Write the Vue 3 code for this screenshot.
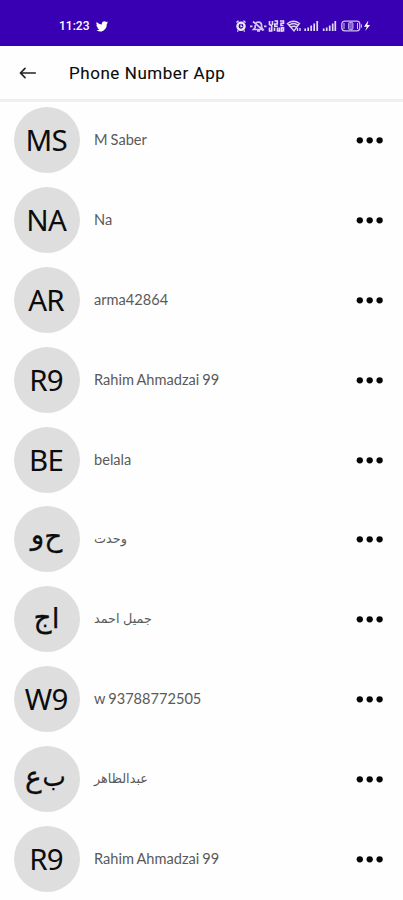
<script setup>
const contacts = [
  { initials: ['M', 'S'], name: 'M Saber' },
  { initials: ['N', 'A'], name: 'Na' },
  { initials: ['A', 'R'], name: 'arma42864' },
  { initials: ['R', '9'], name: 'Rahim Ahmadzai 99' },
  { initials: ['B', 'E'], name: 'belala' },
  { initials: ['ح', 'و'], name: 'وحدت', rtl: true },
  { initials: ['ا', 'ج'], name: 'جمیل احمد', rtl: true },
  { initials: ['W', '9'], name: 'w 93788772505' },
  { initials: ['ب', 'ع'], name: 'عبدالظاهر', rtl: true },
  { initials: ['R', '9'], name: 'Rahim Ahmadzai 99' },
]
const shapes = { 'ح': 'hah', 'و': 'waw', 'ا': 'alef', 'ج': 'jeem', 'ب': 'beh', 'ع': 'ain' }
</script>

<template>
  <div class="screen">
    <div class="status">
      <span class="clock">11:23</span>
      <svg class="bird" width="12" height="11" viewBox="0 0 24 22" fill="#fff">
        <path d="M24 3.2a9 9 0 0 1-2.5 2.6C22 14 16 21 8 21c-3 0-5.600-.8-8-2.300 2.700.3 5-.4 7-2-2.200-.2-3.800-1.500-4.500-3.500h2C2 12.500.7 10.500.8 8.200l2 .6C.6 7.200.2 4.400 1.500 2c2.600 3 6 4.800 10.200 5C10.800 3 13.500.5 16.800.5c1.400 0 2.600.6 3.500 1.500l3-1.100c-.3 1-1 1.900-2 2.600z" />
      </svg>
      <svg class="indicators" width="138" height="14" viewBox="0 0 138 14" fill="none" stroke="#fff">
        <g opacity=".92">
          <circle cx="6" cy="7.300" r="3.600" stroke-width="2.300" />
          <path d="M1.500 3.500l2-1.800M10.500 3.500l-2-1.800M3.300 11.500l-1 1M8.700 11.500l1 1M6 5.500v2.200h1.500" stroke-width="1.200" />
        </g>
        <g opacity=".78" stroke-width="1.700">
          <path d="M18.500 10.500h9.500l-1.400-2V6q-.4-2.700-3.200-3-2.800.3-3.200 3v2.500zM22 12h3M18 2.500l10.500 9M15 7.300h2.500M29 7.300h2.500" />
        </g>
        <g opacity=".85" stroke-width="1.600">
          <path d="M34.500 2v3.500l2.200 1.200V12M37.500 2v4M34.500 8.500V12h3M39.500 2h2.800v3h-2.500v2.200h3M45 2h3.500v2.300H46v2.200h2.500M39.500 8.500V12M42.500 8.500V12h2V8.500M46.500 12V8.700h2v3.100z" />
        </g>
        <g opacity=".82" stroke-width="1.400">
          <path d="M52.500 4.500q6-4.600 12 0L59 12zM54 6.200q4.600-3.400 9 0M55.800 8.300q3-2 5.800 0" />
          <path d="M62.500 9v3M65 9v3" />
        </g>
        <g opacity=".85" stroke-width="1.700">
          <path d="M70.200 9.500V12M73.200 8.500V12M76.200 6.500V12M79.200 4.500V12M82.200 2V12" />
          <path d="M88.700 9.500V12M91.700 8.500V12M94.700 6.500V12M97.700 4.500V12M100.300 2V12" />
        </g>
        <g opacity=".75">
          <rect x="106.800" y="2.200" width="18" height="9.600" rx="3" stroke-width="1.300" />
          <path d="M109 4v6M122.500 4v6" stroke-width="1" />
          <rect x="113.500" y="3.500" width="4.500" height="7" rx="1" fill="#fff" fill-opacity=".5" stroke-width=".8" />
          <path d="M126.500 5.500v3" />
        </g>
        <path d="M133 2l-4 5.700h2.800l-1.600 4.300 4.900-6h-2.800l1-4z" fill="#fff" stroke="none" />
      </svg>
    </div>

    <header class="bar">
      <svg width="18" height="14" viewBox="0 0 18 14" fill="none" stroke="#222" stroke-width="1.600" stroke-linecap="round">
        <path d="M16.300 7H1.800M6 2.400L1.500 7 6 11.600" />
      </svg>
      <h1>Phone Number App</h1>
    </header>

    <ul class="list">
      <li v-for="(c, i) in contacts" :key="i" class="row">
        <div class="avatar" :class="{ arabic: c.rtl }" :dir="c.rtl ? 'rtl' : 'ltr'">
          <span v-for="ch in c.initials" :key="ch" :class="shapes[ch]">{{ ch }}</span>
        </div>
        <span class="name" :class="{ arabic: c.rtl }" :dir="c.rtl ? 'rtl' : 'ltr'">{{ c.name }}</span>
        <svg class="more" width="27" height="8" viewBox="0 0 27 8">
          <circle cx="3.800" cy="4.300" r="3.150" />
          <circle cx="13.700" cy="4.300" r="3.150" />
          <circle cx="23.600" cy="4.300" r="3.150" />
        </svg>
      </li>
    </ul>
  </div>
</template>

<style>
body {
  margin: 0;
  background: #fff;
}
</style>

<style scoped>
.screen {
  width: 403px;
  height: 900px;
  overflow: hidden;
  background: #fefefe;
}
.status {
  box-sizing: border-box;
  display: flex;
  align-items: center;
  height: 46px;
  padding: 6px 30px 0 59px;
  background: #3900b3;
  color: #fff;
}
.clock {
  width: 37px;
  font: 500 12px/14px Roboto, sans-serif;
  letter-spacing: 0;
}
.indicators {
  margin-left: auto;
}
.bar {
  box-sizing: border-box;
  display: flex;
  align-items: center;
  height: 56px;
  padding: 0 0 0 19px;
  border-bottom: 3px solid #efefef;
}
.bar h1 {
  margin: 0 0 0 32px;
  color: #0a0a0a;
  font: 400 17px/24px Roboto, sans-serif;
  letter-spacing: 0.55px;
  -webkit-text-stroke: 0.1px #0a0a0a;
}
.list {
  margin: 0;
  padding: 0;
  list-style: none;
}
.row {
  box-sizing: border-box;
  display: flex;
  align-items: center;
  height: 79.800px;
  padding: 0 20px 3px 14px;
}
.avatar {
  box-sizing: border-box;
  display: flex;
  align-items: center;
  justify-content: center;
  width: 66px;
  height: 66px;
  padding-right: 1px;
  flex: none;
  border-radius: 50%;
  background: #dedede;
  color: #0c0c0c;
  font: 400 29.500px/40px "Noto Sans", sans-serif;
}
.avatar span {
  margin: 0 -0.4px;
}
.avatar.arabic {
  font-family: "DejaVu Sans", sans-serif;
  font-size: 28px;
  -webkit-text-stroke: 0.25px #0c0c0c;
}
.avatar.arabic span {
  margin: 0;
}
.avatar .hah {
  transform: translateY(-2px);
}
.avatar .waw {
  transform: translateY(-4px);
}
.avatar .beh {
  transform: translate(-1px, -2px) scaleX(0.88);
}
.avatar .ain,
.avatar .jeem {
  transform: translateY(-1px) scaleY(1.05);
}
.name {
  margin-left: 14px;
  color: #5a5a5a;
  font: 400 14.600px/20px Lato, sans-serif;
  word-spacing: -0.7px;
  white-space: nowrap;
}
.name.arabic {
  font-family: "DejaVu Sans", sans-serif;
  font-size: 12.800px;
}
.more {
  margin-left: auto;
  fill: #050505;
}
</style>
